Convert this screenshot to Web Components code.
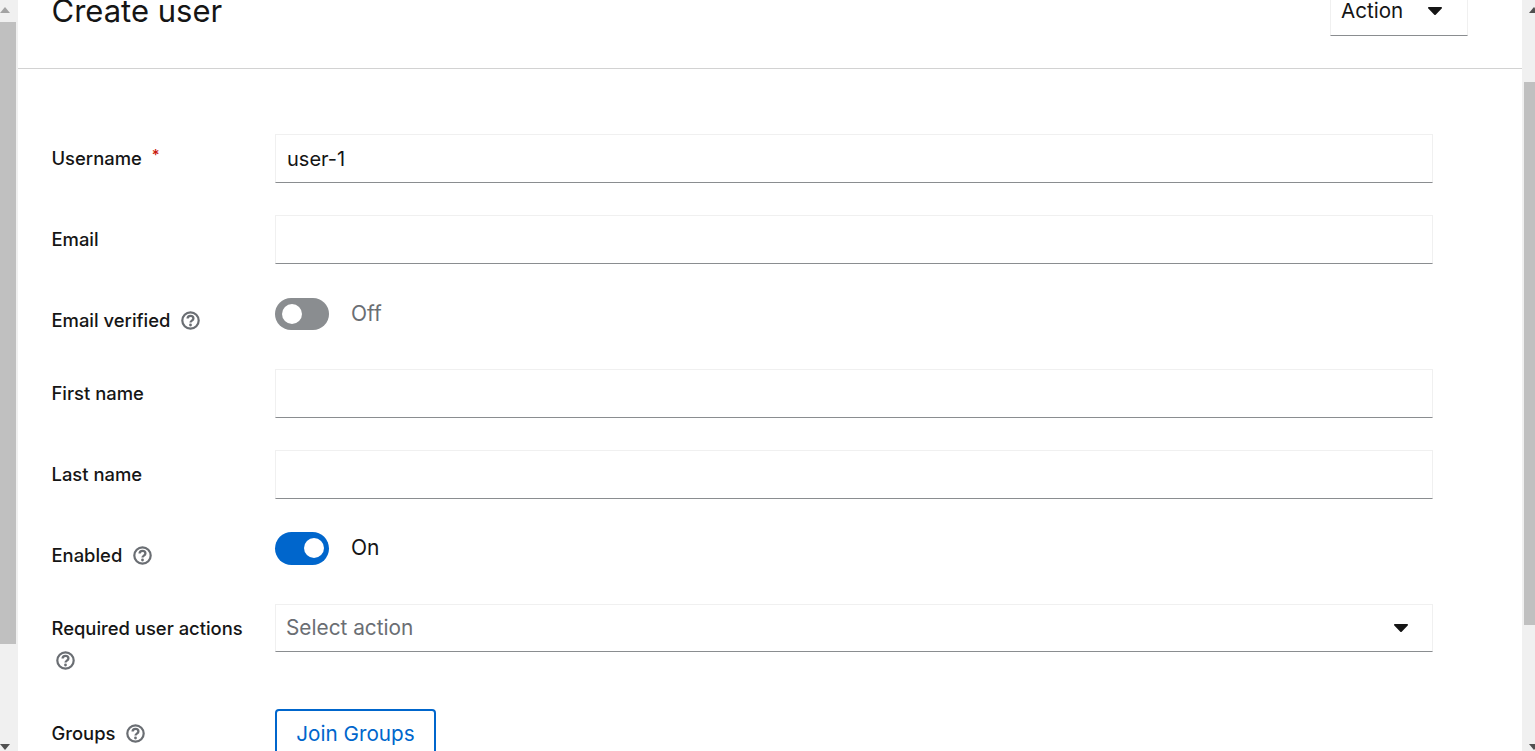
<!doctype html>
<html lang="en">
<head>
<meta charset="utf-8">
<title>Create user</title>
<style>
  html, body { margin: 0; height: 100%; overflow: hidden; background: #fff; }
  body { font-family: Inter, "Liberation Sans", sans-serif; color: #151515; }
</style>
</head>
<body>
<app-shell>
  <scroll-bar slot="left" thumb-top="22" thumb-height="622" thumb-left="0" thumb-width="16" arrow-left="0" up-color="#a3a3a3"></scroll-bar>
  <page-header title="Create user"><caret-select slot="action" label="Action"></caret-select></page-header>
  <user-form>
    <form-row label="Username" required><text-field value="user-1"></text-field></form-row>
    <form-row label="Email"><text-field></text-field></form-row>
    <form-row label="Email verified" help><toggle-switch label="Off"></toggle-switch></form-row>
    <form-row label="First name"><text-field></text-field></form-row>
    <form-row label="Last name"><text-field></text-field></form-row>
    <form-row label="Enabled" help><toggle-switch label="On" checked></toggle-switch></form-row>
    <form-row label="Required user actions" help wrap><select-field placeholder="Select action"></select-field></form-row>
    <form-row label="Groups" help><outline-button>Join Groups</outline-button></form-row>
  </user-form>
  <scroll-bar slot="right" thumb-top="82" thumb-height="543" thumb-left="2" thumb-width="11" arrow-left="7" up-color="#505050"></scroll-bar>
</app-shell>

<script>
  const CARET = `<svg width="14" height="8" viewBox="0 0 14 8" aria-hidden="true"><path fill="#151515" d="M1 0h12c.9 0 1.3 1 .7 1.6L7.7 7.7c-.4.4-1 .4-1.4 0L.3 1.6C-.3 1 .1 0 1 0z"/></svg>`;

  class AppShell extends HTMLElement {
    connectedCallback() {
      this.attachShadow({ mode: "open" }).innerHTML = `
        <style>
          :host { display: flex; height: 751px; overflow: hidden; background: #fff; }
          main { flex: 1; min-width: 0; }
          ::slotted([slot=left]) { width: 18px; }
          ::slotted([slot=right]) { width: 13px; }
        </style>
        <slot name="left"></slot>
        <main><slot></slot></main>
        <slot name="right"></slot>`;
    }
  }

  class ScrollBar extends HTMLElement {
    connectedCallback() {
      var top = this.getAttribute("thumb-top");
      var height = this.getAttribute("thumb-height");
      var left = this.getAttribute("thumb-left");
      var width = this.getAttribute("thumb-width");
      var arrowLeft = this.getAttribute("arrow-left");
      var upColor = this.getAttribute("up-color");
      this.attachShadow({ mode: "open" }).innerHTML = `
        <style>
          :host { display: block; position: relative; flex: none; height: 751px; background: #f0f0f0; overflow: hidden; }
          .thumb { position: absolute; background: #c0c0c0; top: ${top}px; height: ${height}px; left: ${left}px; width: ${width}px; }
          .up, .down { position: absolute; left: ${arrowLeft}px; width: 0; height: 0;
            border-left: 5.5px solid transparent; border-right: 5.5px solid transparent; }
          .up { top: 7px; border-bottom: 6px solid ${upColor}; }
          .down { bottom: 1px; border-top: 6px solid #505050; }
        </style>
        <div class="up"></div><div class="thumb"></div><div class="down"></div>`;
    }
  }

  class PageHeader extends HTMLElement {
    connectedCallback() {
      this.attachShadow({ mode: "open" }).innerHTML = `
        <style>
          :host { display: flex; justify-content: space-between; align-items: flex-end; box-sizing: border-box;
            height: 69px; padding: 0 54px 0 33.5px; border-bottom: 1px solid #d2d2d2; overflow: hidden; }
          h1 { margin: 0 0 36px; font: 400 31px/42px Inter, "Liberation Sans", sans-serif; color: #151515; }
          .action { align-self: flex-end; margin-bottom: 32px; }
        </style>
        <h1>${this.getAttribute("title")}</h1>
        <div class="action"><slot name="action"></slot></div>`;
    }
  }

  class CaretSelect extends HTMLElement {
    connectedCallback() {
      this.attachShadow({ mode: "open" }).innerHTML = `
        <style>
          :host { display: flex; box-sizing: border-box; width: 138px; height: 48px; align-items: center; padding: 0 25px 0 10px;
            justify-content: space-between; border: 1px solid #f0f0f0; border-bottom-color: #8a8d90; font-size: 20.6px; }
          span { margin-top: -3px; }
          svg { display: block; margin-top: -3px; }
        </style>
        <span>${this.getAttribute("label")}</span>${CARET}`;
    }
  }

  class UserForm extends HTMLElement {
    connectedCallback() {
      this.attachShadow({ mode: "open" }).innerHTML = `
        <style>
          :host { display: flex; flex-direction: column; gap: 32px; padding: 65px 89px 0 33.5px; }
        </style>
        <slot></slot>`;
    }
  }

  class FormRow extends HTMLElement {
    connectedCallback() {
      var required = this.hasAttribute("required") ? `<span class="req">*</span>` : "";
      var help = this.hasAttribute("help") ? `<help-icon></help-icon>` : "";
      var wrap = this.hasAttribute("wrap");
      this.attachShadow({ mode: "open" }).innerHTML = `
        <style>
          :host { display: grid; grid-template-columns: 223.5px 1fr; align-items: start; }
          .label { padding: 8px 0 1px; font-size: 18.4px; line-height: 32px; font-weight: 500; color: #151515; display: flex; flex-wrap: wrap; align-items: center; }
          .req { color: #c9190b; margin-left: 10px; font-size: 15px; line-height: 26px; align-self: flex-start; }
          help-icon { margin-left: ${wrap ? "4px" : "11px"}; }
          .br { flex-basis: 100%; height: 0; }
        </style>
        <div class="label"><span>${this.getAttribute("label")}</span>${required}${wrap ? '<span class="br"></span>' : ""}${help}</div>
        <div><slot></slot></div>`;
    }
  }

  class HelpIcon extends HTMLElement {
    connectedCallback() {
      this.attachShadow({ mode: "open" }).innerHTML = `
        <style>:host { display: inline-flex; align-items: center; width: 19px; height: 32px; } svg { display: block; }</style>
        <svg width="19" height="19" viewBox="0 0 19 19" fill="none" aria-hidden="true">
          <circle cx="9.5" cy="9.5" r="8.2" stroke="#6a6e73" stroke-width="2.2"/>
          <path d="M6.6 7.6c0-1.7 1.3-2.7 2.9-2.7s2.9 1 2.9 2.5c0 2.2-2.9 2.2-2.9 4.2" stroke="#6a6e73" stroke-width="2.3"/>
          <circle cx="9.5" cy="14" r="1.4" fill="#6a6e73"/>
        </svg>`;
    }
  }

  class TextField extends HTMLElement {
    connectedCallback() {
      this.attachShadow({ mode: "open" }).innerHTML = `
        <style>
          :host { display: flex; box-sizing: border-box; height: 49px; align-items: center; padding: 0 11px;
            border: 1px solid #f0f0f0; border-bottom-color: #8a8d90; font-size: 20px; color: #151515; }
        </style>
        <span>${this.getAttribute("value") || ""}</span>`;
    }
  }

  class SelectField extends HTMLElement {
    connectedCallback() {
      this.attachShadow({ mode: "open" }).innerHTML = `
        <style>
          :host { display: flex; box-sizing: border-box; height: 48px; align-items: center; justify-content: space-between; padding: 0 24px 0 10px;
            border: 1px solid #f0f0f0; border-bottom-color: #8a8d90; font-size: 20.8px; color: #6a6e73; }
          span { margin-top: -1px; }
          svg { display: block; }
        </style>
        <span>${this.getAttribute("placeholder")}</span>${CARET}`;
    }
  }

  class ToggleSwitch extends HTMLElement {
    connectedCallback() {
      var on = this.hasAttribute("checked");
      this.attachShadow({ mode: "open" }).innerHTML = `
        <style>
          :host { display: flex; gap: 22px; height: 41px; align-items: flex-start; padding-top: ${on ? 1 : 2}px; box-sizing: border-box;
            font-size: 21px; line-height: 30px; color: ${on ? "#151515" : "#6a6e73"}; }
          .track { position: relative; width: 54px; height: ${on ? 33 : 32}px; border-radius: 17px; background: ${on ? "#06c" : "#8a8d90"}; flex: none; }
          .knob { position: absolute; top: 6px; left: ${on ? "28.5px" : "7px"}; width: 20px; height: 20px; border-radius: 50%;
            background: #fff; }
          span { margin-top: 1px; }
        </style>
        <div class="track"><div class="knob"></div></div>
        <span>${this.getAttribute("label")}</span>`;
    }
  }

  class OutlineButton extends HTMLElement {
    connectedCallback() {
      this.attachShadow({ mode: "open" }).innerHTML = `
        <style>
          :host { display: inline-flex; box-sizing: border-box; height: 48px; width: 161px; align-items: center; justify-content: center;
            border: 2px solid #06c; border-radius: 4px; color: #06c; font-size: 20.7px; }
        </style>
        <slot></slot>`;
    }
  }

  customElements.define("app-shell", AppShell);
  customElements.define("scroll-bar", ScrollBar);
  customElements.define("page-header", PageHeader);
  customElements.define("caret-select", CaretSelect);
  customElements.define("user-form", UserForm);
  customElements.define("form-row", FormRow);
  customElements.define("help-icon", HelpIcon);
  customElements.define("text-field", TextField);
  customElements.define("select-field", SelectField);
  customElements.define("toggle-switch", ToggleSwitch);
  customElements.define("outline-button", OutlineButton);
</script>
</body>
</html>
